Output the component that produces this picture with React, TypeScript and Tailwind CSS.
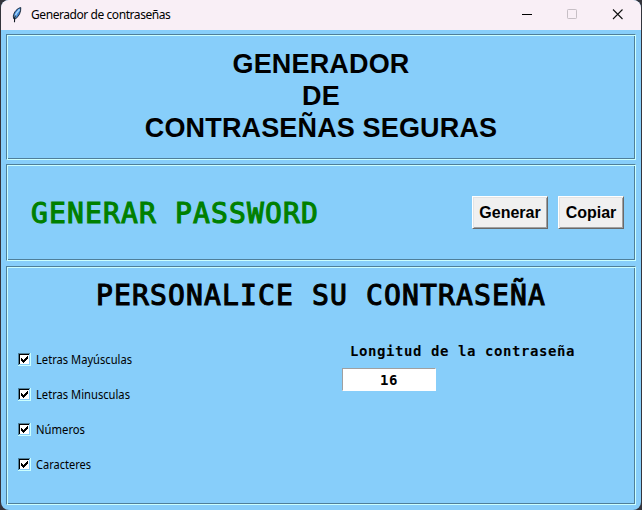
import type { ReactNode } from "react";

const groove =
  "border border-t-[#4f7f99] border-l-[#4f7f99] border-b-[#cbffff] border-r-[#cbffff] shadow-[inset_1px_1px_0_#cbffff,inset_-1px_-1px_0_#4f7f99]";

const mono =
  "font-['DejaVu_Sans_Mono',monospace] text-[28px] leading-[34px] tracking-[1.14px] whitespace-pre [-webkit-text-stroke:1.1px_currentColor]";

function Feather() {
  return (
    <svg width="10" height="16" viewBox="0 0 10 16" className="shrink-0">
      <path d="M8.8 0.6 C5.4 1.2 2 4.8 1.3 9 L1.6 11.6 L3.8 11.6 C7 9.4 9 5 8.8 0.6Z" fill="#3f86d6" stroke="#14202e" strokeWidth="0.9" />
      <path d="M7.6 2.4 C5 5 3.6 7.4 2.6 10.4" fill="none" stroke="#a5d6fa" strokeWidth="1.5" />
      <path d="M3.4 8.5 L2.6 11 L2.5 15.2" fill="none" stroke="#101820" strokeWidth="1.1" />
    </svg>
  );
}

function TkButton({ width, children }: { width: string; children: ReactNode }) {
  return (
    <button
      className={`${width} h-[33px] border border-t-white border-l-white border-b-[#696969] border-r-[#696969] bg-[#f0f0f0] text-center text-[16px] leading-[31px] font-bold whitespace-nowrap text-black shadow-[inset_1px_1px_0_#e3e3e3,inset_-1px_-1px_0_#a0a0a0]`}
    >
      {children}
    </button>
  );
}

function Check({ label, width }: { label: string; width: number }) {
  return (
    <label className="flex h-[35px] items-center">
      <svg width="13" height="13" viewBox="0 0 13 13" shapeRendering="crispEdges" className="shrink-0">
        <rect width="13" height="13" fill="#cbffff" />
        <path d="M0 0H12V1H1V12H0Z" fill="#4f7f99" />
        <rect x="1" y="1" width="11" height="11" fill="#87cefa" />
        <path d="M1 1H11V2H2V11H1Z" fill="#000" />
        <rect x="2" y="2" width="9" height="9" fill="#fff" />
        <path d="M3 5h1v1h1v1h1v-1h1v-1h1v-1h1v-1h1v3h-1v1h-1v1h-1v1h-1v1h-1v-1h-1v-1h-1z" fill="#000" />
      </svg>
      <svg width={width + 4} height="18" className="ml-[5px] overflow-visible">
        <text x="0" y="13" textLength={width} lengthAdjust="spacingAndGlyphs" className="font-['Noto_Sans',sans-serif] text-[12px]">
          {label}
        </text>
      </svg>
    </label>
  );
}

export default function App() {
  return (
    <div className="h-[510px] w-[642px] overflow-hidden bg-[#34343c] px-px font-['Liberation_Sans',Arial,sans-serif] text-black">
      <div className="flex h-[510px] flex-col overflow-hidden rounded-[8px] bg-[#87cefa]">
        <header className="flex h-[30px] shrink-0 items-center bg-[#f9eff6] pl-[11px]">
          <Feather />
          <span className="ml-[9px] w-[140px] font-['Noto_Sans',sans-serif] text-[12px] tracking-[-0.43px] whitespace-nowrap">
            Generador de contraseñas
          </span>
          <svg width="104" height="12" viewBox="0 0 104 12" className="mr-[16px] ml-auto" fill="none">
            <path d="M1 5.5H11" stroke="#000" />
            <rect x="46.5" y="0.5" width="9" height="9" rx="0.7" stroke="#c7bfc5" />
            <path d="M92 0.5L101.5 10M101.5 0.5L92 10" stroke="#111" strokeWidth="1.1" />
          </svg>
        </header>

        <main className="flex flex-col px-[5px] pt-[4px]">
          <section className={`${groove} h-[126px] pt-[13px] text-center text-[27px] leading-[32px] font-bold tracking-[0.15px]`}>
            <h1>
              GENERADOR
              <br />
              DE
              <br />
              CONTRASEÑAS SEGURAS
            </h1>
          </section>

          <section className={`${groove} mt-[4px] flex h-[97px] items-center pr-[11px] pl-[24px]`}>
            <h2 className={`${mono} pt-[2px] text-[#008000]`}>GENERAR PASSWORD</h2>
            <div className="ml-auto flex gap-[10px]">
              <TkButton width="w-[76px]">Generar</TkButton>
              <TkButton width="w-[66px]">Copiar</TkButton>
            </div>
          </section>

          <section className={`${groove} mt-[5px] h-[239px] pt-[12px]`}>
            <h2 className={`${mono} text-center`}>PERSONALICE SU CONTRASEÑA</h2>
            <div className="flex pt-[29px]">
              <div className="w-[324px] pl-[11px]">
                <Check label="Letras Mayúsculas" width={96} />
                <Check label="Letras Minusculas" width={94} />
                <Check label="Números" width={49} />
                <Check label="Caracteres" width={55} />
              </div>
              <div className="pl-[11px] font-['DejaVu_Sans_Mono',monospace] text-[14px] font-bold tracking-[0.57px]">
                <p className="pl-[8px] leading-[18px] whitespace-nowrap">Longitud de la contraseña</p>
                <div className="mt-[8px] h-[23px] w-[94px] border border-t-[#a0a0a0] border-r-white border-b-white border-l-[#a0a0a0] bg-white text-center leading-[22px]">
                  16
                </div>
              </div>
            </div>
          </section>
        </main>
      </div>
    </div>
  );
}
